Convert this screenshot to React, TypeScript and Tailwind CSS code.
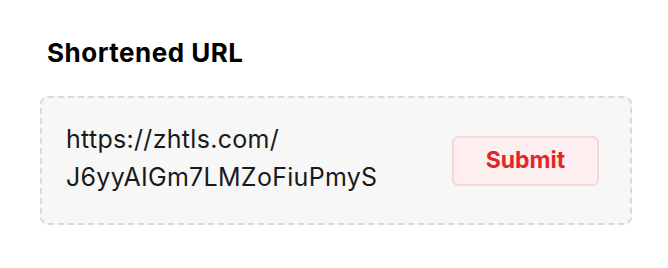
import React from "react";

const App = () => {
  return (
    <div className="w-[668px] h-[268px] bg-white font-['Inter',sans-serif] px-10 pt-[37px]">
      <h2 className="pl-[7px] text-[26px] font-bold tracking-[0.5px] text-black leading-[32px]">
        Shortened URL
      </h2>
      <div className="mt-[27px] w-[592px] h-[129px] flex items-center justify-between rounded-lg border-2 border-dashed border-[#d3dcdc] bg-[#f7f7f7] pl-[24px] pr-[31px]">
        <p className="mb-[5px] text-[25px] leading-[38px] tracking-[0.3px] text-[#1a1a1a]">
          https://zhtls.com/
          <br />
          J6yyAIGm7LMZoFiuPmyS
        </p>
        <button className="w-[147px] h-[50px] rounded-md border-2 border-[#f7d6d7] bg-[#fdeeef] text-[23px] font-bold text-[#e1262a]">
          Submit
        </button>
      </div>
    </div>
  );
};

export default App;
